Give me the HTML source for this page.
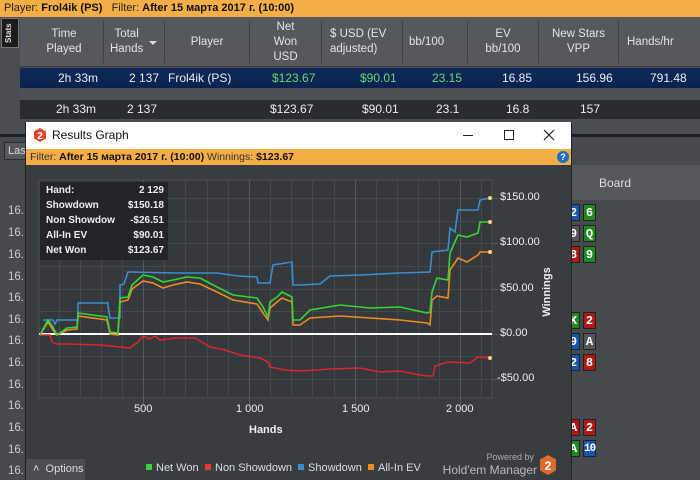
<!DOCTYPE html>
<html><head><meta charset="utf-8"><style>
*{margin:0;padding:0;box-sizing:border-box}
body{width:700px;height:480px;overflow:hidden;background:#46494d;font-family:"Liberation Sans","DejaVu Sans",sans-serif;position:relative;color:#ddd}
.a{position:absolute}
.top{left:0;top:0;width:700px;height:17px;background:#f3ae47;font-size:11px;color:#222;padding:2px 4px;white-space:nowrap}
.top b{color:#111}
.hdr{left:0;top:17px;width:700px;height:50px;background:#55585c;border-bottom:1px solid #3c3e42}
.h{position:absolute;top:0;height:50px;font-size:11.5px;color:#e4e4e4;text-align:center;display:flex;align-items:center;justify-content:center;line-height:15px}
.sep{position:absolute;top:4px;width:1px;height:42px;background:#3e4044}
.row{left:20px;width:680px;font-size:12px;color:#eee}
.c{position:absolute;top:0;white-space:nowrap}
.card{position:absolute;width:13px;height:17px;font-family:"Liberation Mono",monospace;font-weight:bold;font-size:12px;color:#fff;text-align:center;line-height:17px;border:1px solid #222}
.lab{position:absolute;left:8px;font-size:11.5px;color:#ccc}
.tip td{padding:0 0 0 0;height:15px;font-size:10px;font-weight:bold;color:#eee}
.yl{position:absolute;left:500px;font-size:11px;color:#eee}
.xl{position:absolute;top:403px;font-size:11px;color:#eee}
.lg{position:absolute;top:462px;font-size:11px;color:#ddd;white-space:nowrap}
.sq{display:inline-block;width:6px;height:6px;margin-right:4px;vertical-align:1px}
</style></head><body>
<div class="a top">Player: <b>Frol4ik (PS)</b>&nbsp;&nbsp; Filter: <b>After 15 марта 2017 г. (10:00)</b></div>
<div class="a hdr">
 <div class="a" style="left:0;top:0;width:20px;height:120px;background:#4a4d51"></div>
 <div class="a" style="left:1px;top:1px;width:18px;height:30px;background:#1c1c1c;border:1px solid #777;color:#ddd;font-size:8px;font-weight:bold;writing-mode:vertical-rl;transform:rotate(180deg);text-align:center;line-height:14px">Stats</div>
 <div class="h" style="left:25px;width:78px">Time<br>Played</div><div class="sep" style="left:103px"></div>
 <div class="h" style="left:104px;width:60px;justify-content:flex-start;padding-left:6px">Total<br>Hands</div>
 <div class="a" style="left:149px;top:24px;width:0;height:0;border-left:4px solid transparent;border-right:4px solid transparent;border-top:4px solid #ddd"></div>
 <div class="sep" style="left:164px"></div>
 <div class="h" style="left:165px;width:84px">Player</div><div class="sep" style="left:249px"></div>
 <div class="h" style="left:250px;width:71px">Net<br>Won<br>USD</div><div class="sep" style="left:321px"></div>
 <div class="h" style="left:322px;width:80px;justify-content:flex-start;padding-left:8px;text-align:left">$ USD (EV<br>adjusted)</div><div class="sep" style="left:402px"></div>
 <div class="h" style="left:403px;width:64px;justify-content:flex-start;padding-left:6px">bb/100</div><div class="sep" style="left:467px"></div>
 <div class="h" style="left:468px;width:70px">EV<br>bb/100</div><div class="sep" style="left:538px"></div>
 <div class="h" style="left:539px;width:79px">New Stars<br>VPP</div><div class="sep" style="left:618px"></div>
 <div class="h" style="left:619px;width:70px;justify-content:flex-start;padding-left:8px">Hands/hr</div>
</div>
<div class="a" style="left:0;top:67px;width:20px;height:68px;background:#4a4d51"></div>
<div class="a row" style="top:68px;height:20px;background:linear-gradient(#0e2a5a,#0a2250)">
 <div class="c" style="left:38px;top:3px">2h 33m</div><div class="c" style="left:109px;top:3px">2 137</div><div class="c" style="left:148px;top:3px">Frol4ik (PS)</div>
 <div class="c" style="left:252px;top:3px;color:#6bd86b">$123.67</div><div class="c" style="left:340px;top:3px;color:#6bd86b">$90.01</div><div class="c" style="left:412px;top:3px;color:#6bd86b">23.15</div>
 <div class="c" style="left:482px;top:3px">16.85</div><div class="c" style="left:556px;top:3px">156.96</div><div class="c" style="left:630px;top:3px">791.48</div>
</div>
<div class="a row" style="top:88px;height:12px;background:#4d5054"></div>
<div class="a row" style="top:100px;height:19px;background:#2a2c2f">
 <div class="c" style="left:36px;top:2px">2h 33m</div><div class="c" style="left:107px;top:2px">2 137</div>
 <div class="c" style="left:250px;top:2px">$123.67</div><div class="c" style="left:342px;top:2px">$90.01</div><div class="c" style="left:416px;top:2px">23.1</div>
 <div class="c" style="left:486px;top:2px">16.8</div><div class="c" style="left:560px;top:2px">157</div>
</div>
<div class="a" style="left:20px;top:119px;width:680px;height:16px;background:#4a4d51"></div>
<div class="a" style="left:0;top:134px;width:700px;height:3px;background:#1e1f21"></div>
<div class="a" style="left:0;top:137px;width:700px;height:343px;background:#46494d"></div>
<div class="a" style="left:4px;top:142px;width:24px;height:18px;background:#55585c;border:1px solid #2b2d30;font-size:11px;color:#ddd;padding:2px 3px">Last</div>
<div class="a" style="left:0;top:165px;width:26px;height:315px;background:#46494d;border-right:1px solid #2b2d30"></div>
<div class="a" style="left:571px;top:165px;width:129px;height:35px;background:#55585c"></div>
<div class="a" style="left:599px;top:176px;font-size:12px;color:#ddd">Board</div>
<div class="lab" style="top:205px">16.</div><div class="lab" style="top:227px">16.</div><div class="lab" style="top:249px">16.</div><div class="lab" style="top:271px">16.</div><div class="lab" style="top:292px">16.</div><div class="lab" style="top:314px">16.</div><div class="lab" style="top:335px">16.</div><div class="lab" style="top:357px">16.</div><div class="lab" style="top:379px">16.</div><div class="lab" style="top:400px">16.</div><div class="lab" style="top:422px">16.</div><div class="lab" style="top:444px">16.</div><div class="lab" style="top:465px">16.</div>
<div class="card" style="left:567px;top:204px;background:#1656b0">2</div><div class="card" style="left:583px;top:204px;background:#1e8a1e">6</div>
<div class="card" style="left:567px;top:225px;background:#555">9</div><div class="card" style="left:583px;top:225px;background:#1e8a1e">Q</div>
<div class="card" style="left:567px;top:246px;background:#b01818">8</div><div class="card" style="left:583px;top:246px;background:#1e8a1e">9</div>
<div class="card" style="left:567px;top:312px;background:#1e8a1e">K</div><div class="card" style="left:583px;top:312px;background:#b01818">2</div>
<div class="card" style="left:567px;top:333px;background:#1656b0">9</div><div class="card" style="left:583px;top:333px;background:#555">A</div>
<div class="card" style="left:567px;top:354px;background:#1656b0">2</div><div class="card" style="left:583px;top:354px;background:#b01818">8</div>
<div class="card" style="left:567px;top:419px;background:#b01818">A</div><div class="card" style="left:583px;top:419px;background:#b01818">2</div>
<div class="card" style="left:567px;top:440px;background:#1e8a1e">A</div><div class="card" style="left:583px;top:440px;background:#1656b0;font-size:11px;letter-spacing:-1px">10</div>

<div class="a" style="left:25px;top:122px;width:547px;height:358px;background:#393c40;border-left:1px solid #222;border-right:1px solid #222"></div>
<div class="a" style="left:26px;top:122px;width:545px;height:27px;background:#fff"></div>
<svg class="a" style="left:33px;top:128px" width="14" height="14" viewBox="0 0 14 14"><polygon points="7,0 13,3.5 13,10.5 7,14 1,10.5 1,3.5" fill="#e0452a"/><text x="7" y="11" font-size="10" font-weight="bold" fill="#fff" text-anchor="middle" font-family="Liberation Sans">2</text></svg>
<div class="a" style="left:52px;top:128px;font-size:12px;color:#111">Results Graph</div>
<div class="a" style="left:463px;top:135px;width:10px;height:1px;background:#222"></div>
<div class="a" style="left:504px;top:130px;width:10px;height:10px;border:1px solid #222"></div>
<svg class="a" style="left:543px;top:129px" width="12" height="12"><path d="M1 1L11 11M11 1L1 11" stroke="#222" stroke-width="1.2"/></svg>
<div class="a" style="left:26px;top:149px;width:545px;height:16px;background:#f3ae47;font-size:10.5px;color:#333;padding:2px 4px;white-space:nowrap">Filter: <b style="color:#111">After 15 марта 2017 г. (10:00)</b> Winnings: <b style="color:#111">$123.67</b></div>
<div class="a" style="left:557px;top:151px;width:12px;height:12px;border-radius:50%;background:#1d6fc4;color:#fff;font-size:9px;font-weight:bold;text-align:center;line-height:12px">?</div>

<svg class="a" style="left:0;top:0" width="700" height="480">
<rect x="39" y="180" width="453" height="218" fill="#35383c" stroke="#4c4f53"/>
<g stroke="#45484c" stroke-width="1">
<path d="M39 198.5H492M39 221.5H492M39 243.5H492M39 266.5H492M39 289.5H492M39 311.5H492M39 356.5H492M39 379.5H492"/>
<path d="M59.5 180V398M80.5 180V398M101.5 180V398M122.5 180V398M164.5 180V398M185.5 180V398M207.5 180V398M228.5 180V398M270.5 180V398M291.5 180V398M312.5 180V398M334.5 180V398M376.5 180V398M397.5 180V398M418.5 180V398M439.5 180V398M481.5 180V398"/>
</g>
<g stroke="#55585c"><path d="M143.5 180V405M249.5 180V405M355.5 180V405M460.5 180V405"/>
<path d="M492 198.5H498M492 243.5H498M492 289.5H498M492 334.5H498M492 379.5H498"/></g>
<line x1="39" y1="334" x2="492" y2="334" stroke="#fff" stroke-width="2"/>
<g fill="none" stroke-width="1.6">
<polyline stroke="#3a8fd0" points="43,320 53,320 55,324 57,320 78,320 78,303 108,303 108,306 110,318 120,318 120,285 124,284 128,272 130,272 173,273 217,273 238,276 257,277 258,283 270,283 273,265 292,262 293,285 300,285 320,284 330,276 360,275 400,273 430,272 432,252 448,250 450,228 455,232 458,210 478,210 480,200 490,198"/>
<polyline stroke="#e8262b" stroke-opacity=".9" points="40,335 50,335 52,342 57,344 67,344 100,345 130,348 138,342 143,336 150,339 155,336 160,340 175,338 195,338 210,347 225,350 240,355 260,358 268,362 270,367 285,370 300,371 330,369 360,368 380,372 400,371 420,375 428,376 433,376 435,366 448,362 470,363 478,357 490,358"/>
<polyline stroke="#f08a22" points="40,335 48,322 53,330 57,335 67,330 77,329 78,316 107,320 110,334 118,335 120,302 128,300 132,289 143,281 153,283 163,288 173,285 187,282 200,284 217,292 233,300 257,304 263,313 268,320 270,308 277,302 282,298 292,302 293,325 300,325 310,318 340,316 370,318 400,320 427,323 430,325 432,300 437,296 448,298 450,270 458,258 467,262 478,255 480,252 490,252"/>
<polyline stroke="#33d633" points="40,335 48,320 53,327 57,335 67,328 77,327 78,313 107,317 110,332 118,333 120,298 128,297 132,285 143,275 153,277 163,282 173,280 187,277 200,278 217,287 233,295 257,298 263,307 268,317 270,302 277,297 282,292 292,297 293,320 300,320 310,310 340,305 370,308 400,307 427,313 430,312 432,292 437,278 448,280 450,253 458,235 467,237 478,233 480,222 490,222"/>
</g>
<circle cx="490" cy="198" r="2" fill="#ffd27a"/><circle cx="490" cy="222" r="2" fill="#ffd27a"/><circle cx="490" cy="252" r="2" fill="#ffd27a"/><circle cx="490" cy="358" r="2" fill="#ffd27a"/>
<rect x="40" y="182" width="128" height="78" fill="#1f2124" fill-opacity=".85"/>
<text x="546" y="288" transform="rotate(-90 550 288)" font-size="11" font-weight="bold" fill="#eee" font-family="Liberation Sans" text-anchor="middle">Winnings</text>
<polygon points="548,455 556,459.5 556,470.5 548,475 540,470.5 540,459.5" fill="#e06a2a"/>
<text x="548" y="470" font-size="12" font-weight="bold" fill="#fff" text-anchor="middle" font-family="Liberation Sans">2</text>
</svg>
<table class="a tip" style="left:46px;top:183px;width:118px;border-collapse:collapse">
<tr><td>Hand:</td><td style="text-align:right">2 129</td></tr>
<tr><td>Showdown</td><td style="text-align:right">$150.18</td></tr>
<tr><td>Non Showdow</td><td style="text-align:right">-$26.51</td></tr>
<tr><td>All-In EV</td><td style="text-align:right">$90.01</td></tr>
<tr><td>Net Won</td><td style="text-align:right">$123.67</td></tr>
</table>
<div class="yl" style="top:191px">$150.00</div><div class="yl" style="top:236px">$100.00</div><div class="yl" style="top:282px">$50.00</div><div class="yl" style="top:327px">$0.00</div><div class="yl" style="top:372px;left:497px">-$50.00</div>
<div class="xl" style="left:134px">500</div><div class="xl" style="left:236px">1 000</div><div class="xl" style="left:342px">1 500</div><div class="xl" style="left:446px">2 000</div>
<div class="a" style="left:249px;top:424px;font-size:11px;font-weight:bold;color:#eee">Hands</div>
<div class="a" style="left:26px;top:459px;width:59px;height:21px;background:#4a4d51;font-size:11px;color:#ddd;padding:4px 0 0 7px">˄&nbsp;&nbsp;Options</div>
<div class="lg" style="left:146px"><span class="sq" style="background:#33d633"></span>Net Won</div>
<div class="lg" style="left:205px"><span class="sq" style="background:#e83a3a"></span>Non Showdown</div>
<div class="lg" style="left:298px"><span class="sq" style="background:#3a8fd0"></span>Showdown</div>
<div class="lg" style="left:368px"><span class="sq" style="background:#f08a22"></span>All-In EV</div>
<div class="a" style="left:434px;width:100px;text-align:right;top:452px;font-size:9px;color:#aaa">Powered by</div>
<div class="a" style="left:417px;width:120px;text-align:right;top:463px;font-size:12px;color:#bbb;white-space:nowrap">Hold'em Manager</div>
</body></html>
